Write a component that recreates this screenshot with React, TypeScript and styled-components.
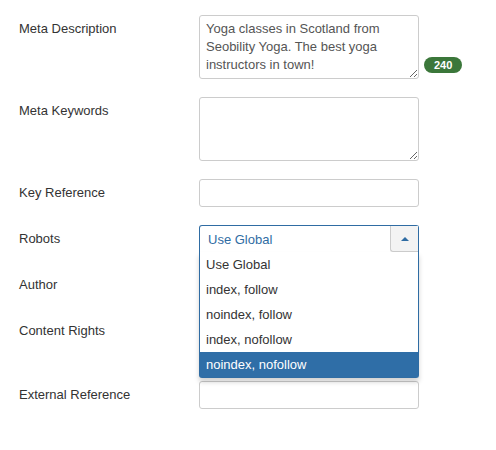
import React from 'react'
import styled, { createGlobalStyle } from 'styled-components'

const GlobalStyle = createGlobalStyle`
  body {
    margin: 0;
    background: #fff;
    font-family: "Liberation Sans", Arial, sans-serif;
    font-size: 13px;
    color: #333;
  }
`

const robotsOptions = ['Use Global', 'index, follow', 'noindex, follow', 'index, nofollow', 'noindex, nofollow']

function App() {
  return (
    <>
      <GlobalStyle />
      <Form>
        <Row>
          <Label>Meta Description</Label>
          <Controls>
            <TextArea defaultValue="Yoga classes in Scotland from Seobility Yoga. The best yoga instructors in town!" />
            <Badge>240</Badge>
          </Controls>
        </Row>
        <Row>
          <Label>Meta Keywords</Label>
          <Controls>
            <TextArea defaultValue="" />
          </Controls>
        </Row>
        <Row>
          <Label>Key Reference</Label>
          <Controls>
            <Input type="text" />
          </Controls>
        </Row>
        <Row>
          <Label>Robots</Label>
          <Controls>
            <SelectBox>
              <SelectHead>
                <SelectValue>Use Global</SelectValue>
                <SelectButton>
                  <Caret />
                </SelectButton>
              </SelectHead>
              <DropList>
                {robotsOptions.map((opt, index) => (
                  <Option key={index} active={index === robotsOptions.length - 1}>
                    {opt}
                  </Option>
                ))}
              </DropList>
            </SelectBox>
          </Controls>
        </Row>
        <Row>
          <Label>Author</Label>
          <Controls>
            <Input type="text" />
          </Controls>
        </Row>
        <Row>
          <Label>Content Rights</Label>
          <Controls>
            <Input type="text" tall />
          </Controls>
        </Row>
        <Row>
          <Label>External Reference</Label>
          <Controls>
            <Input type="text" />
          </Controls>
        </Row>
      </Form>
    </>
  )
}

const Form = styled.div`
  padding: 15px 0 0 19px;
  display: flex;
  flex-direction: column;
  gap: 18px;
`

const Row = styled.div`
  display: flex;
  align-items: flex-start;
`

const Label = styled.div`
  width: 180px;
  padding-top: 5px;
  line-height: 18px;
  color: #333;
`

const Controls = styled.div`
  display: flex;
  align-items: flex-end;
  position: relative;
`

const TextArea = styled.textarea`
  box-sizing: border-box;
  width: 220px;
  height: 64px;
  border: 1px solid #ccc;
  border-radius: 3px;
  padding: 4px 6px;
  font-family: "Liberation Sans", Arial, sans-serif;
  font-size: 13px;
  line-height: 18px;
  color: #555;
  margin: 0;
  resize: vertical;
  outline: none;
`

const Badge = styled.span`
  margin: 0 0 6px 5px;
  background: #3b773a;
  color: #fff;
  font-weight: bold;
  font-size: 11px;
  line-height: 16px;
  height: 16px;
  padding: 0 10px;
  border-radius: 9px;
`

const Input = styled.input<{ tall?: boolean }>`
  box-sizing: border-box;
  width: 220px;
  height: ${p => (p.tall ? '46px' : '28px')};
  border: 1px solid #ccc;
  border-radius: 3px;
  margin: 0;
  padding: 4px 6px;
  font-family: "Liberation Sans", Arial, sans-serif;
  font-size: 13px;
  outline: none;
`

const SelectBox = styled.div`
  position: relative;
  width: 220px;
  height: 28px;
`

const SelectHead = styled.div`
  box-sizing: border-box;
  height: 27px;
  display: flex;
  border: 1px solid #2f6ca3;
  border-bottom: none;
  border-radius: 3px 3px 0 0;
  background: #fff;
`

const SelectValue = styled.div`
  flex: 1;
  padding: 5px 0 0 8px;
  line-height: 18px;
  color: #2f6ca3;
`

const SelectButton = styled.div`
  box-sizing: border-box;
  width: 28px;
  height: 26px;
  background: #f3f3f3;
  border-left: 1px solid #ccc;
  border-bottom: 1px solid #ccc;
  border-radius: 0 0 0 3px;
  display: flex;
  align-items: center;
  justify-content: center;
`

const Caret = styled.span`
  width: 0;
  height: 0;
  border-left: 4px solid transparent;
  border-right: 4px solid transparent;
  border-bottom: 4px solid #2f6ca3;
`

const DropList = styled.ul`
  position: absolute;
  top: 27px;
  left: 0;
  width: 220px;
  box-sizing: border-box;
  margin: 0;
  padding: 0;
  list-style: none;
  background: #fff;
  border: 1px solid #2f6ca3;
  border-top: none;
  border-radius: 0 0 3px 3px;
  box-shadow: 0 4px 5px rgba(0, 0, 0, 0.18);
  z-index: 10;
`

const Option = styled.li<{ active?: boolean }>`
  height: 25px;
  line-height: 25px;
  padding-left: 6px;
  color: ${p => (p.active ? '#fff' : '#333')};
  background: ${p => (p.active ? '#2f6ea7' : 'transparent')};
`

export default App
